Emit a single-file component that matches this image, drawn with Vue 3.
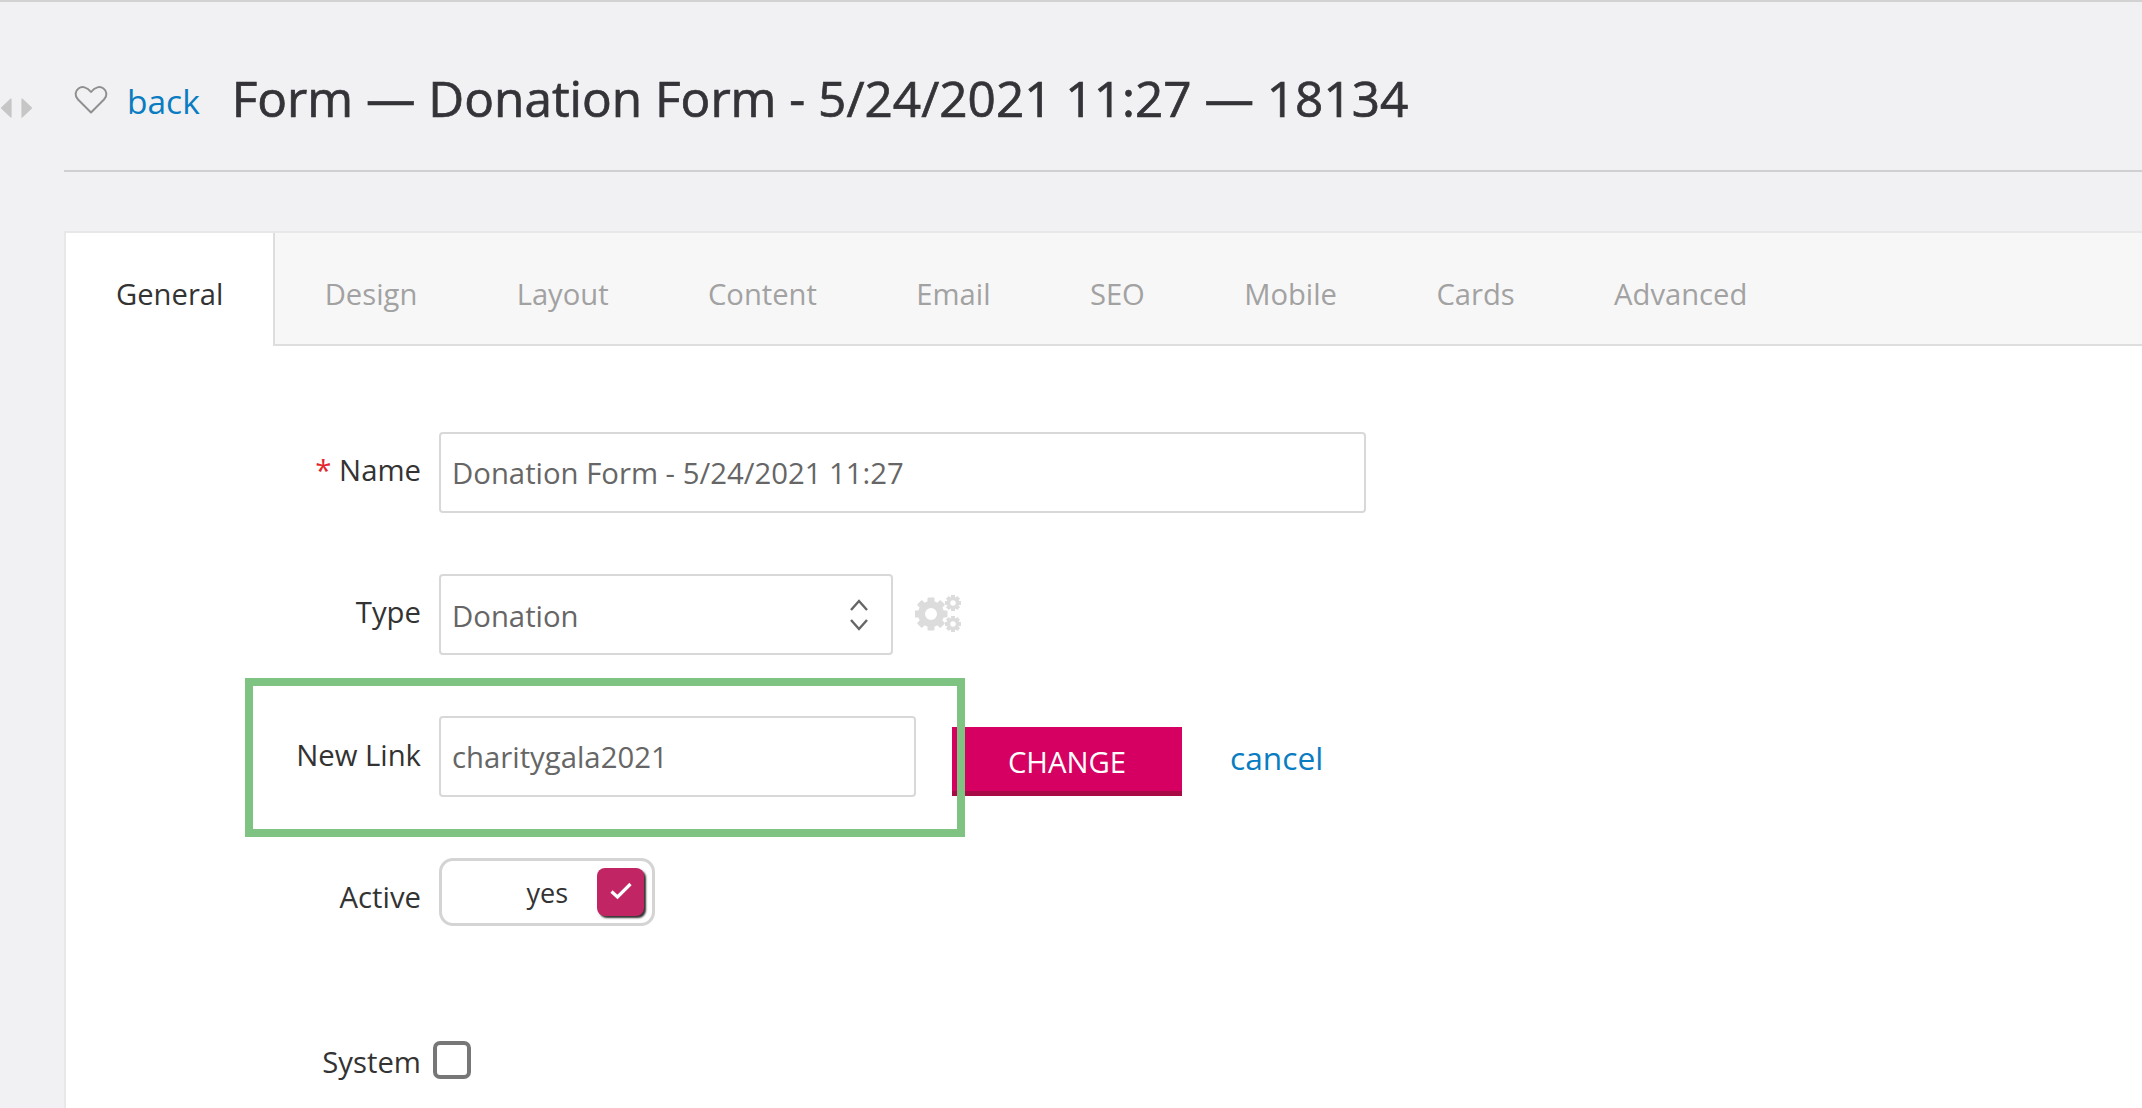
<script setup>
const tabs = ['Design', 'Layout', 'Content', 'Email', 'SEO', 'Mobile', 'Cards', 'Advanced']
const gearTeeth = [0, 45, 90, 135, 180, 225, 270, 315]
</script>

<template>
  <div class="page">
    <aside class="rail">
      <svg class="arrows" width="34" height="20" viewBox="0 0 34 20">
        <path d="M11 1 L1.500 10 L11 19 Z" fill="#c6c6c6" stroke="#c6c6c6" stroke-width="1.200" stroke-linejoin="round" />
        <path d="M22 1 L31.500 10 L22 19 Z" fill="#c6c6c6" stroke="#c6c6c6" stroke-width="1.200" stroke-linejoin="round" />
      </svg>
    </aside>
    <main class="main">
      <header class="head">
        <svg class="heart" width="34" height="30" viewBox="0 0 34 30">
          <path d="M17 27.5 L4 14.5 C0.5 11 1 6 4.5 3.5 C8 1 13 1.800 17 7 C21 1.800 26 1 29.500 3.500 C33 6 33.500 11 30 14.500 Z" fill="none" stroke="#8f8f8f" stroke-width="2" stroke-linejoin="round" />
        </svg>
        <a class="back">back</a>
        <h1 class="title">Form — Donation Form - 5/24/2021 11:27 — 18134</h1>
      </header>

      <section class="card">
        <nav class="tabs">
          <div class="tab active">General</div>
          <div v-for="t in tabs" :key="t" class="tab">{{ t }}</div>
          <div class="tab-rest"></div>
        </nav>

        <div class="form">
          <div class="row">
            <label class="label"><span class="req">*</span> Name</label>
            <div class="field name">Donation Form - 5/24/2021 11:27</div>
          </div>
          <div class="row">
            <label class="label">Type</label>
            <div class="field type">
              <span class="donation">Donation</span>
              <svg class="updown" width="20" height="32" viewBox="0 0 20 32">
                <path d="M2 11 L10 2 L18 11" fill="none" stroke="#666" stroke-width="2.400" />
                <path d="M2 21 L10 30 L18 21" fill="none" stroke="#666" stroke-width="2.400" />
              </svg>
            </div>
            <svg class="gears" width="48" height="40" viewBox="0 0 48 40">
              <g fill="#dcdcdc">
                <g v-for="a in gearTeeth" :key="'a' + a" :transform="`rotate(${a} 16 20)`"><rect x="12.500" y="3.500" width="7" height="6" rx="1" /></g>
                <g v-for="a in gearTeeth" :key="'b' + a" :transform="`rotate(${a} 38 9)`"><rect x="36" y="1" width="4" height="3.500" /></g>
                <g v-for="a in gearTeeth" :key="'c' + a" :transform="`rotate(${a} 38 30)`"><rect x="36" y="22" width="4" height="3.500" /></g>
              </g>
              <circle cx="16" cy="20" r="9.500" fill="none" stroke="#dcdcdc" stroke-width="7" />
              <circle cx="38" cy="9" r="4.500" fill="none" stroke="#dcdcdc" stroke-width="3.500" />
              <circle cx="38" cy="30" r="4.500" fill="none" stroke="#dcdcdc" stroke-width="3.500" />
            </svg>
          </div>
          <div class="row link-row">
            <label class="label">New Link</label>
            <div class="field link">charitygala2021</div>
            <button class="change">CHANGE</button>
            <a class="cancel">cancel</a>
            <div class="highlight"></div>
          </div>
          <div class="row active-row">
            <label class="label">Active</label>
            <div class="toggle">
              <span class="yes">yes</span>
              <span class="check">
                <svg width="22" height="18" viewBox="0 0 22 18">
                  <path d="M1.500 9.500 L7.500 15 L20.500 2" fill="none" stroke="#fff" stroke-width="3.200" />
                </svg>
              </span>
            </div>
          </div>
          <div class="row system-row">
            <label class="label">System</label>
            <span class="box"></span>
          </div>
        </div>
      </section>
    </main>
  </div>
</template>

<style>
html, body { margin: 0; background: #f1f1f3; }
</style>

<style scoped>
.page {
  display: flex;
  width: 2142px;
  height: 1108px;
  overflow: hidden;
  box-sizing: border-box;
  border-top: 2px solid #d2d2d2;
  background: #f1f1f3;
  font-family: "Open Sans", "Noto Sans", sans-serif;
  color: #333;
}
.rail { width: 64px; flex: none; }
.arrows { display: block; margin-top: 96px; }
.main { flex: 1; min-width: 0; }
.head {
  display: flex;
  align-items: center;
  height: 170px;
  box-sizing: border-box;
  padding: 23px 0 0 9px;
  border-bottom: 2px solid #d0d0d2;
}
.heart { flex: none; margin-right: 19px; margin-left: 1px; margin-top: 5px; }
.back { color: #0a7cc1; font-size: 33.500px; margin-right: 32px; margin-top: 7px; }
.title {
  margin: 0;
  font-size: 49.500px;
  font-weight: 400;
  -webkit-text-stroke: 0.7px #343438;
  color: #343438;
  white-space: nowrap;
}
.card {
  margin-top: 59px;
  height: 900px;
  background: #fff;
  border: 2px solid #e8e8e8;
  border-right: 0;
  box-sizing: border-box;
}
.tabs { display: flex; height: 113px; }
.tab {
  display: flex;
  align-items: center;
  padding: 10px 49.700px 0;
  font-size: 29.200px;
  color: #a2a2a2;
  background: #f7f7f7;
  border-bottom: 2px solid #dedede;
}
.tab.active {
  width: 209px;
  box-sizing: border-box;
  padding: 8px 0 0 50px;
  background: #fff;
  color: #333;
  border-bottom: 0;
  border-right: 2px solid #dedede;
}
.tab-rest { flex: 1; background: #f7f7f7; border-bottom: 2px solid #dedede; }
.form { padding-top: 86px; }
.row { display: flex; align-items: center; position: relative; height: 81px; margin-bottom: 61px; }
.label { width: 355px; flex: none; text-align: right; font-size: 29.300px; margin-right: 18px; margin-top: -5px; color: #333; }
.link-row .label { margin-top: -3px; }
.req { color: #e3262b; }
.field {
  box-sizing: border-box;
  height: 81px;
  display: flex;
  align-items: center;
  justify-content: space-between;
  padding: 0 11px;
  border: 2px solid #d8d8d8;
  border-radius: 4px;
  background: #fff;
  font-size: 29.300px;
  color: #666;
}
.name { width: 927px; }
.type { width: 454px; }
.link { width: 477px; }
.donation { margin-top: 2px; }
.updown { margin-right: 11px; }
.gears { margin-left: 22px; margin-top: -2px; }
.change {
  margin-left: 36px;
  width: 230px;
  height: 69px;
  margin-top: 10px;
  box-sizing: border-box;
  border: 0;
  border-bottom: 5px solid #a80a45;
  background: #d60062;
  color: #fff;
  font: 29.300px "Open Sans", "Noto Sans", sans-serif;
  padding: 6px 0 0;
}
.cancel { margin-left: 48px; margin-top: 2px; font-size: 31.700px; color: #0a7cc1; }
.highlight {
  position: absolute;
  left: 179px;
  top: -38px;
  width: 720px;
  height: 159px;
  box-sizing: border-box;
  border: 8px solid #7fc383;
  pointer-events: none;
}
.active-row { height: 68px; margin-bottom: 115px; }
.active-row .label { margin-top: 9px; }
.toggle {
  box-sizing: border-box;
  width: 216px;
  height: 68px;
  display: flex;
  align-items: center;
  justify-content: flex-end;
  border: 3px solid #d4d4d4;
  border-radius: 14px;
  padding-right: 8px;
}
.yes { font-size: 27px; margin-right: 29px; margin-top: 0; color: #333; }
.check {
  width: 47px;
  height: 48px;
  display: flex;
  align-items: center;
  justify-content: center;
  border-radius: 8px;
  background: #c12563;
  box-shadow: 2px 2px 2px #333;
}
.check svg { margin-top: -3px; }
.system-row { height: 38px; margin-bottom: 0; }
.system-row .label { margin-right: 12px; margin-top: 3px; }
.box {
  box-sizing: border-box;
  width: 38px;
  height: 38px;
  border: 4px solid #777;
  border-radius: 7px;
}
</style>
